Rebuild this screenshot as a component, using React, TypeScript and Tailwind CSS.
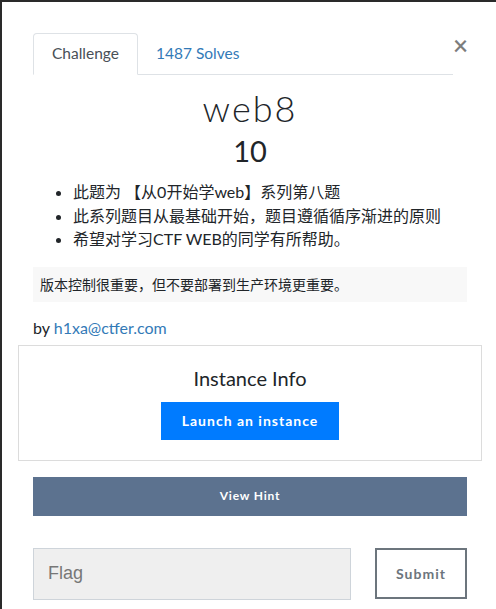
// ── Challenge modal ────────────────────────────────────────────────────────
const sans = "font-['Lato','Noto_Sans_CJK_SC',sans-serif]"

const bullets = [
  '此题为 【从0开始学web】系列第八题',
  '此系列题目从最基础开始，题目遵循循序渐进的原则',
  '希望对学习CTF WEB的同学有所帮助。',
]

export default function App() {
  return (
    <div className="min-h-screen bg-[#2a2a2a] pl-[2px] pt-[2px]">
      <div
        className={`relative min-h-[607px] bg-white pl-[31px] pr-[29px] pt-[31px] text-[#212529] ${sans}`}
      >
        {/* Close */}
        <button className="absolute right-[28px] top-[30px] text-[26px] font-semibold leading-none text-[#7d7d7d]">
          ×
        </button>

        {/* Tabs */}
        <div className="flex w-[420px] border-b border-[#dee2e6] text-[15.5px]">
          <div className="-mb-px flex h-[42px] items-center rounded-t-[4px] border border-[#dee2e6] border-b-white bg-white px-[18px] text-[#495057]">
            Challenge
          </div>
          <div className="flex h-[41px] items-center px-[18px] text-[#337ab7]">1487 Solves</div>
        </div>

        {/* Title */}
        <h2 className="mt-[11px] text-center text-[36px] font-light leading-[44px] tracking-[2px]">
          web8
        </h2>
        <h3 className="mt-[3px] text-center text-[29px] leading-[36px]">10</h3>

        {/* Description */}
        <ul className="mt-[11px] list-disc pl-[40px] text-[16px] leading-[23.5px]">
          {bullets.map((b) => (
            <li key={b}>{b}</li>
          ))}
        </ul>

        <div className="mt-[16px] flex h-[35px] items-center bg-[#f8f8f8] px-[7px] text-[14px]">
          版本控制很重要，但不要部署到生产环境更重要。
        </div>

        <p className="mt-[16px] text-[16px] leading-[20px]">
          by <span className="text-[#337ab7]">h1xa@ctfer.com</span>
        </p>

        {/* Instance */}
        <div className="-mx-[15px] mt-[7px] flex h-[116px] flex-col items-center border border-[#dcdcdc] pt-[20px]">
          <div className="text-[20px] leading-[24px]">Instance Info</div>
          <button className="mt-[12px] h-[38px] w-[178px] bg-[#007bff] text-[14px] font-bold tracking-[1px] text-white">
            Launch an instance
          </button>
        </div>

        <button className="mt-[16px] h-[39px] w-full bg-[#5c728f] text-[12px] font-bold tracking-[0.8px] text-white">
          View Hint
        </button>

        {/* Flag */}
        <div className="mt-[32px] flex justify-between">
          <div className="flex h-[52px] w-[318px] items-center border border-[#ced4da] bg-[#efefef] px-[14px] font-['Liberation_Sans',sans-serif] text-[18px] text-[#777]">
            Flag
          </div>
          <button className="h-[51px] w-[92px] border-2 border-[#6c757d] bg-white text-[14px] font-bold tracking-[1px] text-[#6c757d]">
            Submit
          </button>
        </div>
      </div>
    </div>
  )
}
